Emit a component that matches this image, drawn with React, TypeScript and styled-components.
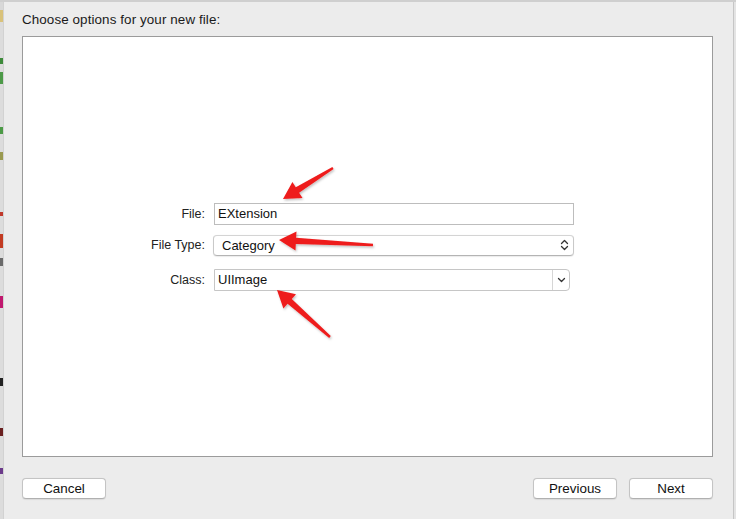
import styled, { createGlobalStyle } from "styled-components";

const GlobalStyle = createGlobalStyle`
  html, body {
    margin: 0;
    padding: 0;
    background: #ececec;
    font-family: "Helvetica Neue", "Liberation Sans", Arial, sans-serif;
    -webkit-font-smoothing: antialiased;
  }
`;

type Pt = [number, number];

const arrows: { tail: Pt; tip: Pt }[] = [
  { tail: [333, 168], tip: [283, 199] },
  { tail: [373, 245], tip: [279, 240] },
  { tail: [330, 337], tip: [277, 290] },
];

const arrowPoints = (tail: Pt, tip: Pt) => {
  const dx = tip[0] - tail[0];
  const dy = tip[1] - tail[1];
  const len = Math.hypot(dx, dy);
  const ux = dx / len;
  const uy = dy / len;
  const nx = -uy;
  const ny = ux;
  const headLen = 17;
  const base: Pt = [tip[0] - ux * headLen, tip[1] - uy * headLen];
  const p = (o: Pt, w: number): string =>
    `${(o[0] + nx * w).toFixed(1)},${(o[1] + ny * w).toFixed(1)}`;
  return [
    p(tail, 1.2),
    p(base, 3.2),
    p(base, 9.5),
    `${tip[0]},${tip[1]}`,
    p(base, -9.5),
    p(base, -3.2),
    p(tail, -1.2),
  ].join(" ");
};

const App = () => {
  return (
    <>
      <GlobalStyle />
      <Screen>
        <DesktopEdge />
        <Sheet>
          <Title>Choose options for your new file:</Title>
          <Panel>
            <Form>
              <Label>File:</Label>
              <TextField>EXtension</TextField>
              <Label>File Type:</Label>
              <PopUp>
                <span>Category</span>
                <svg width="9" height="12" viewBox="0 0 9 12">
                  <path
                    d="M1.5 4.5 L4.5 1.5 L7.5 4.5 M1.5 7.5 L4.5 10.5 L7.5 7.5"
                    fill="none"
                    stroke="#333"
                    strokeWidth="1.3"
                    strokeLinecap="round"
                    strokeLinejoin="round"
                  />
                </svg>
              </PopUp>
              <Label>Class:</Label>
              <Combo>
                <ComboText>UIImage</ComboText>
                <ComboButton>
                  <svg width="9" height="6" viewBox="0 0 9 6">
                    <path
                      d="M1.5 1.5 L4.5 4.5 L7.5 1.5"
                      fill="none"
                      stroke="#333"
                      strokeWidth="1.3"
                      strokeLinecap="round"
                      strokeLinejoin="round"
                    />
                  </svg>
                </ComboButton>
              </Combo>
            </Form>
          </Panel>
          <Footer>
            <Button>Cancel</Button>
            <Spacer />
            <Button>Previous</Button>
            <Button>Next</Button>
          </Footer>
        </Sheet>
        <RightEdge />
        <Overlay width="736" height="519" viewBox="0 0 736 519">
          <defs>
            <filter id="shade" x="-20%" y="-20%" width="140%" height="140%">
              <feDropShadow dx="1" dy="1.5" stdDeviation="1" floodColor="#000" floodOpacity="0.25" />
            </filter>
          </defs>
          {arrows.map((a, i) => (
            <polygon key={i} points={arrowPoints(a.tail, a.tip)} fill="#ee1c1c" filter="url(#shade)" />
          ))}
        </Overlay>
      </Screen>
    </>
  );
};

const Screen = styled.div`
  position: relative;
  width: 736px;
  height: 519px;
  display: flex;
  overflow: hidden;
  background: #ececec;
  border-top: 2px solid #cfcfcf;
  box-sizing: border-box;
`;

const DesktopEdge = styled.div`
  width: 3px;
  flex: none;
  border-right: 1px solid #d2d2d2;
  background: linear-gradient(
    to bottom,
    #d8d8d8 0 8px,
    #d9c27a 8px 20px,
    #dcdcdc 20px 56px,
    #3d8a3a 56px 62px,
    #dcdcdc 62px 70px,
    #4d9a48 70px 82px,
    #dcdcdc 82px 125px,
    #4c9a46 125px 132px,
    #dcdcdc 132px 150px,
    #9a9a50 150px 158px,
    #dcdcdc 158px 210px,
    #c0392b 210px 214px,
    #dcdcdc 214px 232px,
    #c23b22 232px 246px,
    #dcdcdc 246px 256px,
    #6a6a6a 256px 264px,
    #dcdcdc 264px 294px,
    #c0186e 294px 306px,
    #dcdcdc 306px 376px,
    #222 376px 384px,
    #dcdcdc 384px 426px,
    #6a2020 426px 434px,
    #dcdcdc 434px 466px,
    #6b3a8a 466px 472px,
    #dcdcdc 472px
  );
`;

const Sheet = styled.div`
  flex: 1;
  display: flex;
  flex-direction: column;
  padding: 0 20px 18px 18px;
`;

const Title = styled.div`
  height: 34px;
  display: flex;
  align-items: center;
  font-size: 13.4px;
  color: #1a1a1a;
  letter-spacing: 0.1px;
`;

const Panel = styled.div`
  height: 421px;
  box-sizing: border-box;
  background: #fff;
  border: 1px solid #9b9b9b;
  display: flex;
  align-items: center;
  justify-content: center;
  padding-right: 20px;
`;

const Form = styled.div`
  display: grid;
  grid-template-columns: 64px 360px;
  column-gap: 9px;
  row-gap: 10px;
  align-items: center;
  & > :nth-child(5),
  & > :nth-child(6) {
    margin-top: 3px;
  }
`;

const Label = styled.div`
  text-align: right;
  font-size: 12.5px;
  color: #222;
  white-space: nowrap;
`;

const TextField = styled.div`
  height: 22px;
  box-sizing: border-box;
  border: 1px solid #bdbdbd;
  background: #fff;
  padding: 0 3px;
  font-size: 13px;
  line-height: 20px;
  color: #111;
`;

const PopUp = styled.div`
  height: 21px;
  box-sizing: border-box;
  margin-left: -1px;
  border: 1px solid #c9c9c9;
  border-top-color: #d4d4d4;
  border-bottom-color: #b4b4b4;
  border-radius: 4px;
  background: #fff;
  box-shadow: 0 0.5px 1px rgba(0, 0, 0, 0.08);
  display: flex;
  align-items: center;
  justify-content: space-between;
  padding: 0 4px 0 8px;
  font-size: 13px;
  color: #111;
`;

const Combo = styled.div`
  height: 22px;
  width: 356px;
  box-sizing: border-box;
  display: flex;
  border: 1px solid #c6c6c6;
  border-radius: 0 4px 4px 0;
  background: #fff;
`;

const ComboText = styled.div`
  flex: 1;
  padding: 0 3px;
  font-size: 13px;
  line-height: 20px;
  color: #111;
`;

const ComboButton = styled.div`
  width: 16px;
  border-left: 1px solid #d6d6d6;
  display: flex;
  align-items: center;
  justify-content: center;
`;

const Footer = styled.div`
  display: flex;
  align-items: center;
  gap: 12px;
  margin-top: 21px;
`;

const Spacer = styled.div`
  flex: 1;
`;

const Button = styled.button`
  width: 84px;
  height: 21px;
  box-sizing: border-box;
  padding: 0;
  background: #fff;
  border: 1px solid #c4c4c4;
  border-bottom-color: #b0b0b0;
  border-radius: 4px;
  box-shadow: 0 0.5px 1px rgba(0, 0, 0, 0.08);
  font-family: inherit;
  font-size: 13.4px;
  color: #111;
`;

const RightEdge = styled.div`
  width: 2px;
  flex: none;
  border-left: 1px solid #c6c6c6;
  background: #e4e4e4;
`;

const Overlay = styled.svg`
  position: absolute;
  left: 0;
  top: -2px;
  pointer-events: none;
`;

export default App;
